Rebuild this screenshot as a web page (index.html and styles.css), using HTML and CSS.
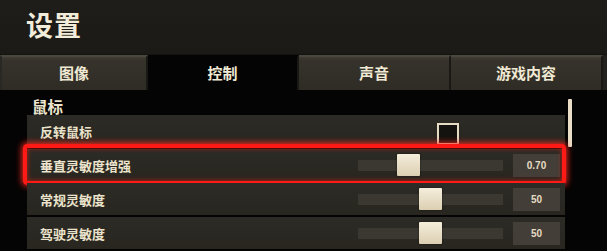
FILE: index.html
```html
<!DOCTYPE html>
<html lang="zh-CN">
<head>
<meta charset="utf-8">
<title>设置</title>
<link rel="stylesheet" href="styles.css">
</head>
<body>
<div class="screen">
  <header class="header">
    <h1 class="title">设置</h1>
  </header>
  <nav class="tabs">
    <div class="tab tab-1">图像</div>
    <div class="tab tab-2 active">控制</div>
    <div class="tab tab-3">声音</div>
    <div class="tab tab-4">游戏内容</div>
  </nav>
  <main class="content">
    <section class="panel">
      <div class="section-title">鼠标</div>
      <div class="rows">
        <div class="row">
          <span class="label">反转鼠标</span>
          <span class="checkbox"></span>
        </div>
        <div class="row highlighted">
          <span class="label">垂直灵敏度增强</span>
          <div class="slider">
            <div class="track"><div class="thumb" style="left:39px"></div></div>
            <div class="value">0.70</div>
          </div>
        </div>
        <div class="row">
          <span class="label">常规灵敏度</span>
          <div class="slider">
            <div class="track"><div class="thumb" style="left:61px"></div></div>
            <div class="value">50</div>
          </div>
        </div>
        <div class="row">
          <span class="label">驾驶灵敏度</span>
          <div class="slider">
            <div class="track"><div class="thumb" style="left:61px"></div></div>
            <div class="value">50</div>
          </div>
        </div>
      </div>
    </section>
    <div class="scrollbar"></div>
  </main>
</div>
</body>
</html>
```
FILE: styles.css
```css
* { box-sizing: border-box; margin: 0; padding: 0; }
html, body {
  width: 607px;
  height: 251px;
  overflow: hidden;
  background: #050404;
}
body {
  font-family: "Noto Sans CJK SC", "Noto Sans", sans-serif;
  color: #eee6cf;
}
.screen {
  width: 607px;
  height: 251px;
  display: flex;
  flex-direction: column;
}
.header {
  height: 55px;
  background: linear-gradient(#1f1d19, #1c1a17);
  border-bottom: 1px solid #141310;
  padding: 7px 0 0 26px;
}
.title {
  font-size: 27px;
  font-weight: 700;
  line-height: 36px;
  color: #f2ecda;
  letter-spacing: 1px;
}
.tabs {
  height: 35px;
  display: flex;
  background: #23211d;
}
.tab {
  display: flex;
  align-items: center;
  justify-content: center;
  font-size: 15px;
  font-weight: 700;
  color: #f0e9d4;
  background: linear-gradient(#403c34 0%, #36332c 10%, #2f2c26 100%);
  border-top: 2px solid #4a473f;
  border-right: 2px solid #1a1815;
  padding-bottom: 2px;
}
.tab-1 { width: 148px; border-left: 2px solid #2a2823; }
.tab-2 { width: 151px; }
.tab-3 { width: 152px; }
.tab-4 { width: 152px; }
.tab.active {
  background: #050404;
  border-top-color: #050404;
}
.content {
  flex: 1;
  display: flex;
  background: #050404;
  padding-left: 27px;
}
.panel {
  width: 538px;
  padding-top: 7px;
}
.section-title {
  font-size: 15.5px;
  font-weight: 700;
  line-height: 18px;
  padding-left: 5px;
  color: #ece4cc;
}
.rows {
  display: flex;
  flex-direction: column;
  gap: 2px;
}
.row {
  position: relative;
  height: 32px;
  display: flex;
  align-items: center;
  justify-content: space-between;
  background: linear-gradient(#2d2b26, #28261f);
  padding: 0 5px 0 13px;
}
.label {
  font-size: 13px;
  font-weight: 700;
  color: #ebe3cb;
}
.checkbox {
  width: 22px;
  height: 22px;
  border: 2px solid #e6dcc4;
  background: #15130f;
  margin-right: 101px;
  margin-top: 6px;
}
.slider {
  display: flex;
  align-items: center;
  gap: 10px;
}
.track {
  position: relative;
  width: 145px;
  height: 11px;
  background: #3b3832;
  border-radius: 1px;
}
.thumb {
  position: absolute;
  top: -6px;
  width: 23px;
  height: 22px;
  background: linear-gradient(#f5eedc, #dccfb2);
  border-radius: 1px;
  box-shadow: 0 0 2px rgba(0,0,0,0.6);
}
.value {
  width: 47px;
  height: 23px;
  background: #433f38;
  display: flex;
  align-items: center;
  justify-content: center;
  font-family: "Liberation Sans", "Noto Sans", sans-serif;
  font-size: 10px;
  font-weight: 700;
  color: #e6dcc4;
}
.highlighted::after {
  content: "";
  position: absolute;
  left: -4px;
  right: -1px;
  top: -5px;
  bottom: -4px;
  border: 4px solid #ff1a16;
  border-radius: 4px;
  box-shadow: 0 0 6px 1px #ff2a20, inset 0 0 5px rgba(255,30,20,0.7);
  pointer-events: none;
}
.scrollbar {
  width: 4px;
  height: 48px;
  margin-left: 3px;
  margin-top: 9px;
  background: #eadfc6;
  border-radius: 1px;
}
```
